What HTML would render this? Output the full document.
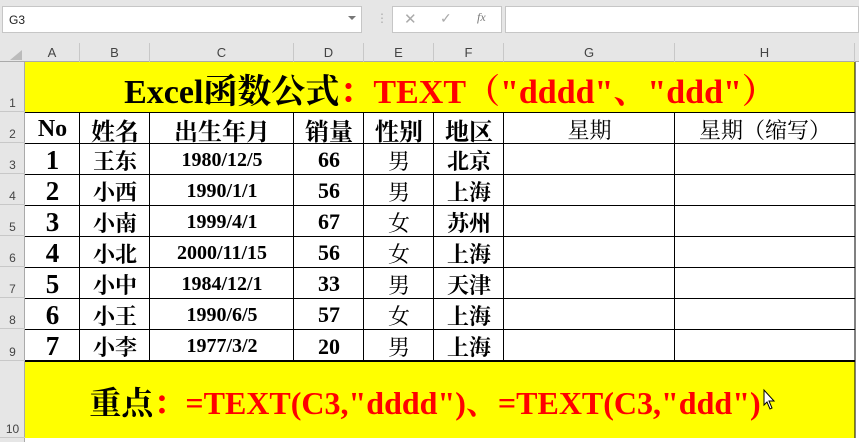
<!DOCTYPE html>
<html><head><meta charset="utf-8"><style>
body{margin:0;width:859px;height:442px;background:#e6e6e6;position:relative;overflow:hidden;font-family:"Liberation Sans",sans-serif}
.a{position:absolute;box-sizing:border-box}
.c{position:absolute;box-sizing:border-box;display:flex;align-items:center;justify-content:center;font-family:"Liberation Serif","Noto Serif CJK SC",serif;font-weight:bold;color:#000;white-space:nowrap;padding-top:3px}
.rh{position:absolute;left:0;width:25px;font-size:12px;color:#444;display:flex;align-items:flex-end;justify-content:center;padding-bottom:1px;box-sizing:border-box;border-bottom:1px solid #c8c8c8}
.ch{position:absolute;top:43px;height:19px;font-size:13px;color:#444;display:flex;align-items:center;justify-content:center;border-right:1px solid #c8c8c8;box-sizing:border-box}
.r .c:nth-child(6n+1){font-size:27px}
.r .c:nth-child(6n+2){font-size:22px}
.r .c:nth-child(6n+3){font-size:20px}
.r .c:nth-child(6n+4){font-size:22px}
.r .c:nth-child(6n+5){font-size:22px;font-weight:normal}
.r .c:nth-child(6n+6){font-size:22px}
</style></head><body>
<div class="a" style="left:0;top:0;width:859px;height:37px;background:#e6e6e6"></div>
<div class="a" style="left:2px;top:6px;width:360px;height:27px;background:#fff;border:1px solid #c6c6c6;font-size:12px;padding:6px 0 0 6px;color:#222">G3</div>
<div class="a" style="left:348px;top:16px;width:0;height:0;border-left:4px solid transparent;border-right:4px solid transparent;border-top:4px solid #777"></div>
<div class="a" style="left:376px;top:11px;font-size:12px;color:#aaa">⋮</div>
<div class="a" style="left:392px;top:6px;width:110px;height:27px;background:#fff;border:1px solid #c6c6c6"></div>
<div class="a" style="left:404px;top:10px;font-size:15px;color:#aaa">✕</div>
<div class="a" style="left:440px;top:10px;font-size:14px;color:#aaa">✓</div>
<div class="a" style="left:477px;top:10px;font-size:12px;color:#777;font-style:italic;font-family:'Liberation Serif',serif">fx</div>
<div class="a" style="left:505px;top:6px;width:354px;height:27px;background:#fff;border:1px solid #c6c6c6"></div>

<div class="a" style="left:0;top:43px;width:859px;height:19px;background:#e6e6e6;border-bottom:1px solid #aaa"></div>
<div class="a" style="left:10px;top:50px;width:0;height:0;border-left:12px solid transparent;border-bottom:10px solid #bbb"></div>
<div class="ch" style="left:25px;width:55px">A</div>
<div class="ch" style="left:80px;width:70px">B</div>
<div class="ch" style="left:150px;width:144px">C</div>
<div class="ch" style="left:294px;width:70px">D</div>
<div class="ch" style="left:364px;width:70px">E</div>
<div class="ch" style="left:434px;width:70px">F</div>
<div class="ch" style="left:504px;width:171px">G</div>
<div class="ch" style="left:675px;width:180px">H</div>

<div class="a" style="left:0;top:62px;width:25px;height:380px;background:#e6e6e6;border-right:1px solid #aaa"></div>
<div class="rh" style="top:62px;height:50px">1</div>
<div class="rh" style="top:112px;height:31px">2</div>
<div class="rh" style="top:143px;height:31px">3</div>
<div class="rh" style="top:174px;height:31px">4</div>
<div class="rh" style="top:205px;height:31px">5</div>
<div class="rh" style="top:236px;height:31px">6</div>
<div class="rh" style="top:267px;height:31px">7</div>
<div class="rh" style="top:298px;height:31px">8</div>
<div class="rh" style="top:329px;height:32px">9</div>
<div class="rh" style="top:361px;height:77px">10</div>

<div class="a" style="left:25px;top:62px;width:830px;height:50px;background:#ff0"></div>
<div class="c" style="left:25px;top:62px;width:830px;height:50px;font-size:34px;padding-left:20px">Excel函数公式<span style="color:#f00">：TEXT（"dddd"、"ddd"）</span></div>
<div class="a" style="left:25px;top:112px;width:830px;height:249px;background:#fff"></div>
<div class="a" style="left:25px;top:361px;width:830px;height:77px;background:#ff0"></div>
<div class="c" style="left:25px;top:374px;width:830px;height:50px;font-size:32px;padding-right:30px">重点<span style="color:#f00">：=TEXT(C3,"dddd")、=TEXT(C3,"ddd")</span></div>
<div class="a" style="left:25px;top:438px;width:834px;height:4px;background:#fff"></div>
<div class="a" style="left:855px;top:62px;width:4px;height:380px;background:#fff"></div>

<div style="position:absolute;left:0;top:0;font-size:24px">
<div class="c" style="left:25px;top:112px;width:55px;height:31px">No</div>
<div class="c" style="left:80px;top:112px;width:70px;height:31px">姓名</div>
<div class="c" style="left:150px;top:112px;width:144px;height:31px">出生年月</div>
<div class="c" style="left:294px;top:112px;width:70px;height:31px">销量</div>
<div class="c" style="left:364px;top:112px;width:70px;height:31px">性别</div>
<div class="c" style="left:434px;top:112px;width:70px;height:31px">地区</div>
<div class="c" style="left:504px;top:112px;width:171px;height:31px;font-weight:normal;font-size:22px">星期</div>
<div class="c" style="left:675px;top:112px;width:180px;height:31px;font-weight:normal;font-size:22px">星期（缩写）</div>
</div>
<div class="r" style="position:absolute;left:0;top:0">
<div class="c" style="left:25px;top:143px;width:55px;height:31px">1</div><div class="c" style="left:80px;top:143px;width:70px;height:31px">王东</div><div class="c" style="left:150px;top:143px;width:144px;height:31px">1980/12/5</div><div class="c" style="left:294px;top:143px;width:70px;height:31px">66</div><div class="c" style="left:364px;top:143px;width:70px;height:31px">男</div><div class="c" style="left:434px;top:143px;width:70px;height:31px">北京</div>
<div class="c" style="left:25px;top:174px;width:55px;height:31px">2</div><div class="c" style="left:80px;top:174px;width:70px;height:31px">小西</div><div class="c" style="left:150px;top:174px;width:144px;height:31px">1990/1/1</div><div class="c" style="left:294px;top:174px;width:70px;height:31px">56</div><div class="c" style="left:364px;top:174px;width:70px;height:31px">男</div><div class="c" style="left:434px;top:174px;width:70px;height:31px">上海</div>
<div class="c" style="left:25px;top:205px;width:55px;height:31px">3</div><div class="c" style="left:80px;top:205px;width:70px;height:31px">小南</div><div class="c" style="left:150px;top:205px;width:144px;height:31px">1999/4/1</div><div class="c" style="left:294px;top:205px;width:70px;height:31px">67</div><div class="c" style="left:364px;top:205px;width:70px;height:31px">女</div><div class="c" style="left:434px;top:205px;width:70px;height:31px">苏州</div>
<div class="c" style="left:25px;top:236px;width:55px;height:31px">4</div><div class="c" style="left:80px;top:236px;width:70px;height:31px">小北</div><div class="c" style="left:150px;top:236px;width:144px;height:31px">2000/11/15</div><div class="c" style="left:294px;top:236px;width:70px;height:31px">56</div><div class="c" style="left:364px;top:236px;width:70px;height:31px">女</div><div class="c" style="left:434px;top:236px;width:70px;height:31px">上海</div>
<div class="c" style="left:25px;top:267px;width:55px;height:31px">5</div><div class="c" style="left:80px;top:267px;width:70px;height:31px">小中</div><div class="c" style="left:150px;top:267px;width:144px;height:31px">1984/12/1</div><div class="c" style="left:294px;top:267px;width:70px;height:31px">33</div><div class="c" style="left:364px;top:267px;width:70px;height:31px">男</div><div class="c" style="left:434px;top:267px;width:70px;height:31px">天津</div>
<div class="c" style="left:25px;top:298px;width:55px;height:31px">6</div><div class="c" style="left:80px;top:298px;width:70px;height:31px">小王</div><div class="c" style="left:150px;top:298px;width:144px;height:31px">1990/6/5</div><div class="c" style="left:294px;top:298px;width:70px;height:31px">57</div><div class="c" style="left:364px;top:298px;width:70px;height:31px">女</div><div class="c" style="left:434px;top:298px;width:70px;height:31px">上海</div>
<div class="c" style="left:25px;top:329px;width:55px;height:32px">7</div><div class="c" style="left:80px;top:329px;width:70px;height:32px">小李</div><div class="c" style="left:150px;top:329px;width:144px;height:32px">1977/3/2</div><div class="c" style="left:294px;top:329px;width:70px;height:32px">20</div><div class="c" style="left:364px;top:329px;width:70px;height:32px">男</div><div class="c" style="left:434px;top:329px;width:70px;height:32px">上海</div>
</div>

<svg class="a" style="left:0;top:0" width="859" height="442">
<g stroke="#000" stroke-width="1">
<line x1="25" y1="112.5" x2="855" y2="112.5"/><line x1="25" y1="143.5" x2="855" y2="143.5"/><line x1="25" y1="174.5" x2="855" y2="174.5"/><line x1="25" y1="205.5" x2="855" y2="205.5"/><line x1="25" y1="236.5" x2="855" y2="236.5"/><line x1="25" y1="267.5" x2="855" y2="267.5"/><line x1="25" y1="298.5" x2="855" y2="298.5"/><line x1="25" y1="329.5" x2="855" y2="329.5"/><line x1="25" y1="361" x2="855" y2="361" stroke-width="2"/>
<line x1="79.5" y1="112" x2="79.5" y2="361"/><line x1="149.5" y1="112" x2="149.5" y2="361"/><line x1="293.5" y1="112" x2="293.5" y2="361"/><line x1="363.5" y1="112" x2="363.5" y2="361"/><line x1="433.5" y1="112" x2="433.5" y2="361"/><line x1="503.5" y1="112" x2="503.5" y2="361"/><line x1="674.5" y1="112" x2="674.5" y2="361"/><line x1="855" y1="62" x2="855" y2="438"/>
</g>
<path d="M764 390 L764 405 L767 402 L770 409 L772 408 L769 401 L774 401 Z" fill="#fff" stroke="#000" stroke-width="1"/>
</svg>
</body></html>
